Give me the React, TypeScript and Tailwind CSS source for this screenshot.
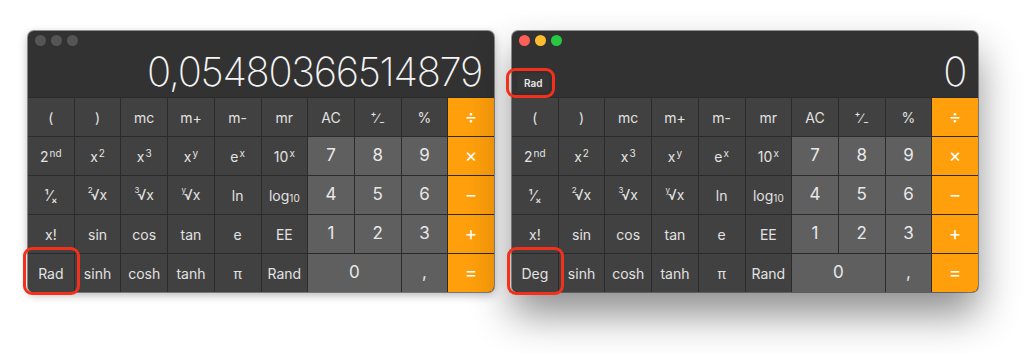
import React from "react";

type Key = { label: React.ReactNode; kind: "fn" | "num" | "op"; span?: number };

const sup = (base: string, s: string) => (
  <span>
    {base}
    <sup className="relative top-[-0.45em] ml-[1px] text-[10px]">{s}</sup>
  </span>
);

const root = (idx: string) => (
  <span className="inline-flex items-start">
    <span className="mt-[-1px] mr-[-2px] text-[8px] leading-[10px]">{idx}</span>
    <span className="leading-[18px]">√x</span>
  </span>
);

function keys(mode: string): Key[] {
  return [
    { label: "(", kind: "fn" },
    { label: ")", kind: "fn" },
    { label: "mc", kind: "fn" },
    { label: "m+", kind: "fn" },
    { label: "m-", kind: "fn" },
    { label: "mr", kind: "fn" },
    { label: "AC", kind: "fn" },
    { label: "⁺∕₋", kind: "fn" },
    { label: "%", kind: "fn" },
    { label: "÷", kind: "op" },

    { label: sup("2", "nd"), kind: "fn" },
    { label: sup("x", "2"), kind: "fn" },
    { label: sup("x", "3"), kind: "fn" },
    { label: sup("x", "y"), kind: "fn" },
    { label: sup("e", "x"), kind: "fn" },
    { label: sup("10", "x"), kind: "fn" },
    { label: "7", kind: "num" },
    { label: "8", kind: "num" },
    { label: "9", kind: "num" },
    { label: "×", kind: "op" },

    { label: "¹⁄ₓ", kind: "fn" },
    { label: root("2"), kind: "fn" },
    { label: root("3"), kind: "fn" },
    { label: root("y"), kind: "fn" },
    { label: "ln", kind: "fn" },
    {
      label: (
        <span>
          log<sub className="relative bottom-[-0.1em] text-[10px]">10</sub>
        </span>
      ),
      kind: "fn",
    },
    { label: "4", kind: "num" },
    { label: "5", kind: "num" },
    { label: "6", kind: "num" },
    { label: "−", kind: "op" },

    { label: "x!", kind: "fn" },
    { label: "sin", kind: "fn" },
    { label: "cos", kind: "fn" },
    { label: "tan", kind: "fn" },
    { label: "e", kind: "fn" },
    { label: "EE", kind: "fn" },
    { label: "1", kind: "num" },
    { label: "2", kind: "num" },
    { label: "3", kind: "num" },
    { label: "+", kind: "op" },

    { label: mode, kind: "fn" },
    { label: "sinh", kind: "fn" },
    { label: "cosh", kind: "fn" },
    { label: "tanh", kind: "fn" },
    { label: "π", kind: "fn" },
    { label: "Rand", kind: "fn" },
    { label: "0", kind: "num", span: 2 },
    { label: ",", kind: "num" },
    { label: "=", kind: "op" },
  ];
}

function CalcKey({ k }: { k: Key }) {
  const bg =
    k.kind === "op"
      ? "bg-[#fe9f0b] text-white text-[19px]"
      : k.kind === "num"
        ? "bg-[#5f5f5f] text-[#e8e8e8] text-[17px]"
        : "bg-[#414141] text-[#e2e2e2] text-[14px]";
  return (
    <div className={`${bg} ${k.span === 2 ? "col-span-2" : ""} flex h-[38px] items-center justify-center`}>
      {k.label}
    </div>
  );
}

function Calculator({
  display,
  mode,
  active,
  badge,
}: {
  display: string;
  mode: string;
  active: boolean;
  badge?: boolean;
}) {
  return (
    <div className="relative w-[466px]">
      <div
        className={`overflow-hidden rounded-[6px] bg-[#323232] ring-1 ring-black/40 ${
          active ? "shadow-[0_22px_40px_rgba(0,0,0,0.45)]" : "shadow-[0_3px_10px_rgba(0,0,0,0.3)]"
        }`}
      >
        <div className="relative h-[66px]">
          {/* traffic lights */}
          <div className="flex gap-[5px] pl-[7px] pt-[4px]">
            <span className={`h-[11px] w-[11px] rounded-full ${active ? "bg-[#fe5f57]" : "bg-[#555555]"}`} />
            <span className={`h-[11px] w-[11px] rounded-full ${active ? "bg-[#febc2e]" : "bg-[#555555]"}`} />
            <span className={`h-[11px] w-[11px] rounded-full ${active ? "bg-[#28c840]" : "bg-[#555555]"}`} />
          </div>
          {badge && (
            <div className="absolute left-[5px] top-[43px] rounded-[3px] bg-[#363636] px-[7px] py-[3px] text-[10px] font-semibold leading-[12px] text-[#e6e6e6]">
              Rad
            </div>
          )}
          <div className="absolute bottom-[1px] right-[12px] text-[40px] font-extralight leading-[48px] tracking-[-1.3px] text-[#f4f4f4]">
            {display}
          </div>
        </div>
        <div className="grid grid-cols-10 gap-px bg-[#2b2b2b] pt-px">
          {keys(mode).map((k, i) => (
            <CalcKey key={i} k={k} />
          ))}
        </div>
      </div>
      {/* annotation outlines */}
      <div className="pointer-events-none absolute left-[-5px] top-[216px] h-[48px] w-[57px] rounded-[9px] border-[3px] border-[#f3301b]" />
      {badge && (
        <div className="pointer-events-none absolute left-[-6px] top-[37px] h-[30px] w-[49px] rounded-[9px] border-[3px] border-[#f3301b]" />
      )}
    </div>
  );
}

export default function App() {
  return (
    <div
      className="flex h-[353px] w-[1024px] gap-[18px] bg-white pl-[28px] pt-[31px]"
      style={{ fontFamily: "Inter, 'Noto Sans', sans-serif" }}
    >
      <Calculator display="0,05480366514879" mode="Rad" active={false} />
      <Calculator display="0" mode="Deg" active badge />
    </div>
  );
}
